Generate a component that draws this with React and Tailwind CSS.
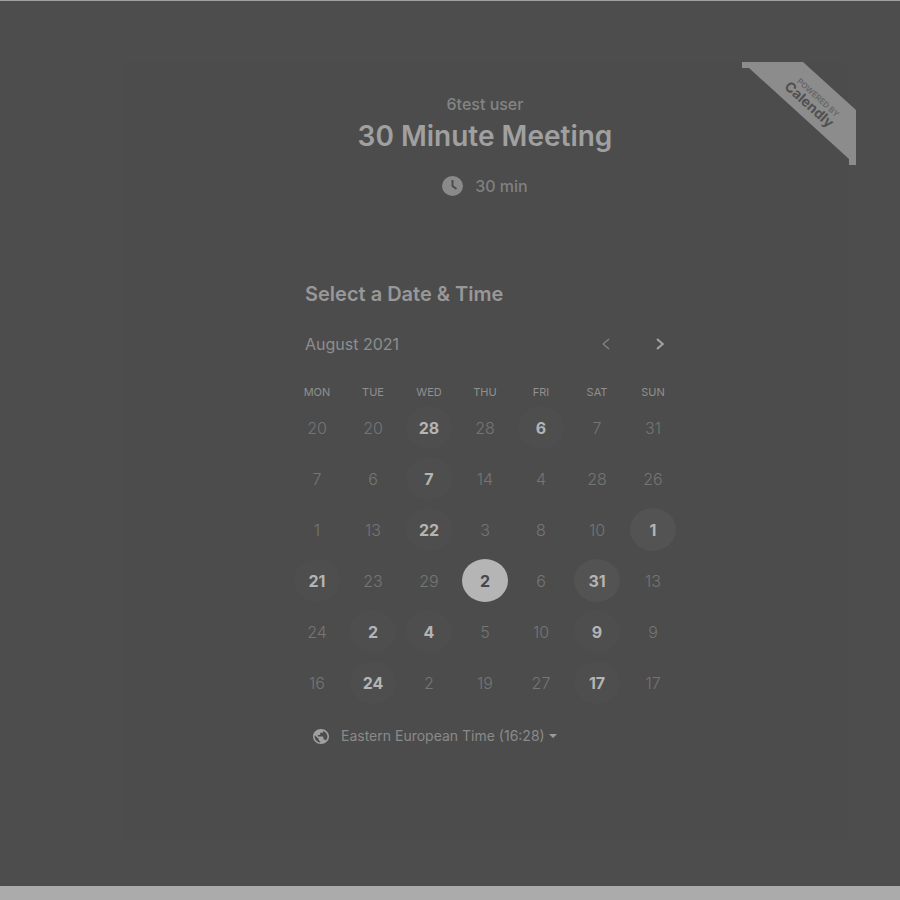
import React from "react";

const weekdays = ["MON", "TUE", "WED", "THU", "FRI", "SAT", "SUN"];

// state: open = can be booked, strong = open with a clearer disc, selected = current choice
const weeks = [
  [["20"], ["20"], ["28", "open"], ["28"], ["6", "open"], ["7"], ["31"]],
  [["7"], ["6"], ["7", "open"], ["14"], ["4"], ["28"], ["26"]],
  [["1"], ["13"], ["22", "open"], ["3"], ["8"], ["10"], ["1", "strong"]],
  [["21", "open"], ["23"], ["29"], ["2", "selected"], ["6"], ["31", "strong"], ["13"]],
  [["24"], ["2", "open"], ["4", "open"], ["5"], ["10"], ["9", "open"], ["9"]],
  [["16"], ["24", "open"], ["2"], ["19"], ["27"], ["17", "open"], ["17"]],
];

const dayStyles = {
  open: "bg-[#4e4e4e] font-bold text-[#b4b4b4]",
  strong: "bg-[#535353] font-bold text-[#b4b4b4]",
  selected: "bg-[#b5b5b5] font-bold text-[#484848]",
  closed: "font-light text-[#757575]",
};

function Day({ value, state = "closed" }) {
  return (
    <td className="h-[51px] p-0 text-center align-middle">
      <button
        type="button"
        disabled={state === "closed"}
        className={`inline-flex h-[43px] w-[46px] items-center justify-center rounded-[50%] align-middle text-base ${dayStyles[state]}`}
      >
        {value}
      </button>
    </td>
  );
}

function Ribbon() {
  return (
    <a href="#calendly" aria-label="Powered by Calendly" className="absolute top-0 -right-2">
      <svg width="114" height="104" viewBox="0 0 114 104" className="block">
        <path d="M0 0H61L114 48V103H107V97L7 6H0Z" fill="#8c8c8c" />
        <g
          transform="translate(70 38) rotate(42)"
          textAnchor="middle"
          className="font-[Inter,sans-serif]"
        >
          <text x="3" y="-3" fontSize="8" fontWeight="600" fill="#666666">POWERED BY</text>
          <text x="1" y="10" fontSize="14" fontWeight="700" fill="#505050">Calendly</text>
        </g>
      </svg>
    </a>
  );
}

export default function App() {
  return (
    <div className="flex min-h-screen flex-col border-t border-b-14 border-t-[#a0a0a0] border-b-[#ababab] bg-[#4d4d4d] pt-[61px] pr-[52px] pb-[46px] pl-[122px] font-[Inter,sans-serif]">
      <main className="relative flex grow flex-col items-center rounded-sm bg-[#4c4c4c] pt-8">
        <Ribbon />

        <header className="flex flex-col items-center">
          <p className="text-base leading-5 font-medium text-[#848484]">6test user</p>
          <h1 className="mt-1 text-[28px] leading-9 font-semibold text-[#a0a0a0]">30 Minute Meeting</h1>
          <p className="mt-5 flex items-center gap-3 text-base leading-6 font-medium text-[#808080]">
            <svg width="21" height="20" viewBox="0 0 21 20" aria-hidden="true">
              <ellipse cx="10.5" cy="10" rx="10.5" ry="10" fill="#8a8a8a" />
              <path d="M10.5 4V10L14.5 13" fill="none" stroke="#4c4c4c" strokeWidth="2" />
            </svg>
            30 min
          </p>
        </header>

        <section className="mt-20 flex w-[392px] max-w-full flex-col">
          <h2 className="pl-4 text-xl leading-8 font-semibold text-[#989898]">Select a Date &amp; Time</h2>

          <div className="mt-5 flex items-center justify-between pr-2 pl-4">
            <span className="text-base leading-7 text-[#8e8e8e]">August 2021</span>
            <div className="flex gap-7">
              <button type="button" aria-label="Previous month" className="flex h-7 w-[26px] items-center justify-center">
                <svg width="8" height="12" viewBox="0 0 8 12" fill="none" stroke="#838383" strokeWidth="1.3">
                  <path d="M7 1L1.2 6L7 11" />
                </svg>
              </button>
              <button type="button" aria-label="Next month" className="flex h-7 w-[26px] items-center justify-center">
                <svg width="8" height="12" viewBox="0 0 8 12" fill="none" stroke="#a6a6a6" strokeWidth="1.9">
                  <path d="M1 1L6.8 6L1 11" />
                </svg>
              </button>
            </div>
          </div>

          <table className="mt-6 w-full table-fixed border-collapse">
            <thead>
              <tr>
                {weekdays.map((d) => (
                  <th key={d} scope="col" className="h-5 p-0 text-center text-[11px] leading-5 font-normal text-[#909090]">
                    {d}
                  </th>
                ))}
              </tr>
            </thead>
            <tbody>
              {weeks.map((week, i) => (
                <tr key={i}>
                  {week.map(([value, state], j) => (
                    <Day key={j} value={value} state={state} />
                  ))}
                </tr>
              ))}
            </tbody>
          </table>

          <button type="button" className="mt-4 flex items-center self-start pl-6 text-sm leading-6 text-[#8a8a8a]">
            <svg width="16" height="15" viewBox="2 2 20 20" preserveAspectRatio="none" aria-hidden="true" className="mr-3" fill="#a0a0a0">
              <path d="M12 2C6.48 2 2 6.48 2 12s4.48 10 10 10 10-4.48 10-10S17.52 2 12 2zm-1 17.93c-3.95-.49-7-3.85-7-7.93 0-.62.08-1.21.21-1.79L9 15v1c0 1.1.9 2 2 2v1.93zm6.900-2.540c-.26-.81-1-1.390-1.900-1.390h-1v-3c0-.55-.45-1-1-1H8v-2h2c.55 0 1-.45 1-1V7h2c1.100 0 2-.9 2-2v-.41c2.930 1.190 5 4.060 5 7.410 0 2.080-.8 3.970-2.100 5.390z" />
            </svg>
            Eastern European Time (16:28)
            <svg width="8" height="4" viewBox="0 0 8 4" aria-hidden="true" className="ml-1" fill="#9b9b9b">
              <path d="M0 0H8L4 4Z" />
            </svg>
          </button>
        </section>
      </main>
    </div>
  );
}
